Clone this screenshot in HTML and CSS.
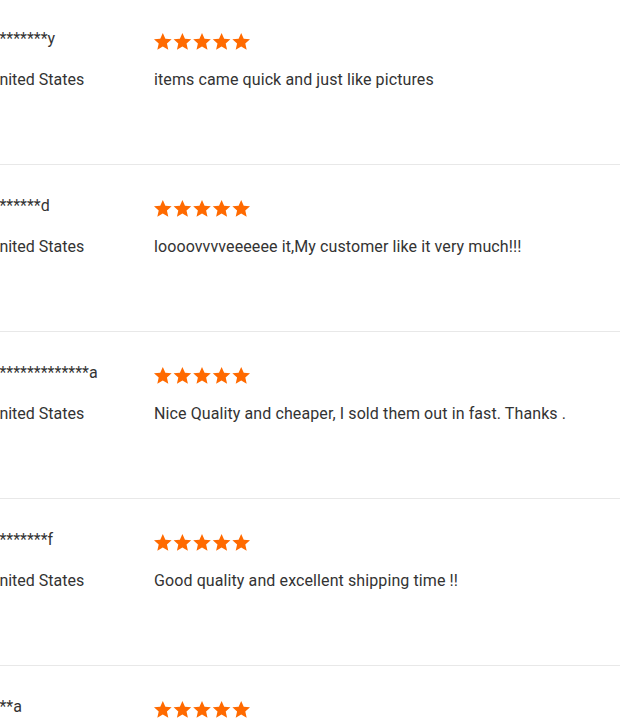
FILE: index.html
```html
<!DOCTYPE html>
<html>
<head>
<meta charset="utf-8">
<link rel="stylesheet" href="styles.css">
</head>
<body>
<div class="list">
  <div class="row">
    <div class="user">
      <div class="name">U*******y</div>
      <div class="country">United States</div>
    </div>
    <div class="review">
      <div class="stars"><svg viewBox="0 0 100 20" class="star-svg"><use href="#s" x="0"/><use href="#s" x="20"/><use href="#s" x="40"/><use href="#s" x="60"/><use href="#s" x="80"/></svg></div>
      <div class="text">items came quick and just like pictures</div>
    </div>
  </div>
  <div class="row">
    <div class="user">
      <div class="name">U******d</div>
      <div class="country">United States</div>
    </div>
    <div class="review">
      <div class="stars"><svg viewBox="0 0 100 20" class="star-svg"><use href="#s" x="0"/><use href="#s" x="20"/><use href="#s" x="40"/><use href="#s" x="60"/><use href="#s" x="80"/></svg></div>
      <div class="text">loooovvvveeeeee it,My customer like it very much!!!</div>
    </div>
  </div>
  <div class="row">
    <div class="user">
      <div class="name">U*************a</div>
      <div class="country">United States</div>
    </div>
    <div class="review">
      <div class="stars"><svg viewBox="0 0 100 20" class="star-svg"><use href="#s" x="0"/><use href="#s" x="20"/><use href="#s" x="40"/><use href="#s" x="60"/><use href="#s" x="80"/></svg></div>
      <div class="text">Nice Quality and cheaper, I sold them out in fast. Thanks .</div>
    </div>
  </div>
  <div class="row">
    <div class="user">
      <div class="name">U*******f</div>
      <div class="country">United States</div>
    </div>
    <div class="review">
      <div class="stars"><svg viewBox="0 0 100 20" class="star-svg"><use href="#s" x="0"/><use href="#s" x="20"/><use href="#s" x="40"/><use href="#s" x="60"/><use href="#s" x="80"/></svg></div>
      <div class="text">Good quality and excellent shipping time !!</div>
    </div>
  </div>
  <div class="row">
    <div class="user">
      <div class="name">U**a</div>
      <div class="country">United States</div>
    </div>
    <div class="review">
      <div class="stars"><svg viewBox="0 0 100 20" class="star-svg"><use href="#s" x="0"/><use href="#s" x="20"/><use href="#s" x="40"/><use href="#s" x="60"/><use href="#s" x="80"/></svg></div>
      <div class="text">Great</div>
    </div>
  </div>
</div>
<svg width="0" height="0" class="defs">
  <defs>
    <path id="s" d="M10 1 L12.6 6.9 L19 7.5 L14.2 11.8 L15.6 18.2 L10 14.9 L4.4 18.2 L5.8 11.8 L1 7.5 L7.4 6.9 Z" fill="#ff6a00"/>
  </defs>
</svg>
</body>
</html>
```
FILE: styles.css
```css
html, body {
  margin: 0;
  padding: 0;
  background: #fff;
}
body {
  font-family: Roboto, "Liberation Sans", sans-serif;
  color: #333;
  overflow: hidden;
}
.list {
  margin: -2px 0 0 -11px;
}
.row {
  display: flex;
  height: 166px;
  border-bottom: 1px solid #e8e8e8;
  box-sizing: content-box;
}
.user {
  width: 165px;
  flex: none;
  padding-top: 31px;
}
.name {
  font-size: 16px;
  line-height: 20px;
  height: 20px;
}
.country {
  font-size: 16px;
  line-height: 20px;
  margin-top: 21px;
}
.review {
  padding-top: 35px;
}
.stars {
  height: 18px;
  line-height: 0;
}
.star-svg {
  width: 98px;
  height: 19.6px;
  display: block;
  margin-left: -1px;
  margin-top: -1px;
}
.text {
  font-size: 16px;
  line-height: 20px;
  margin-top: 20px;
  letter-spacing: 0.1px;
}
.defs {
  position: absolute;
}
```
